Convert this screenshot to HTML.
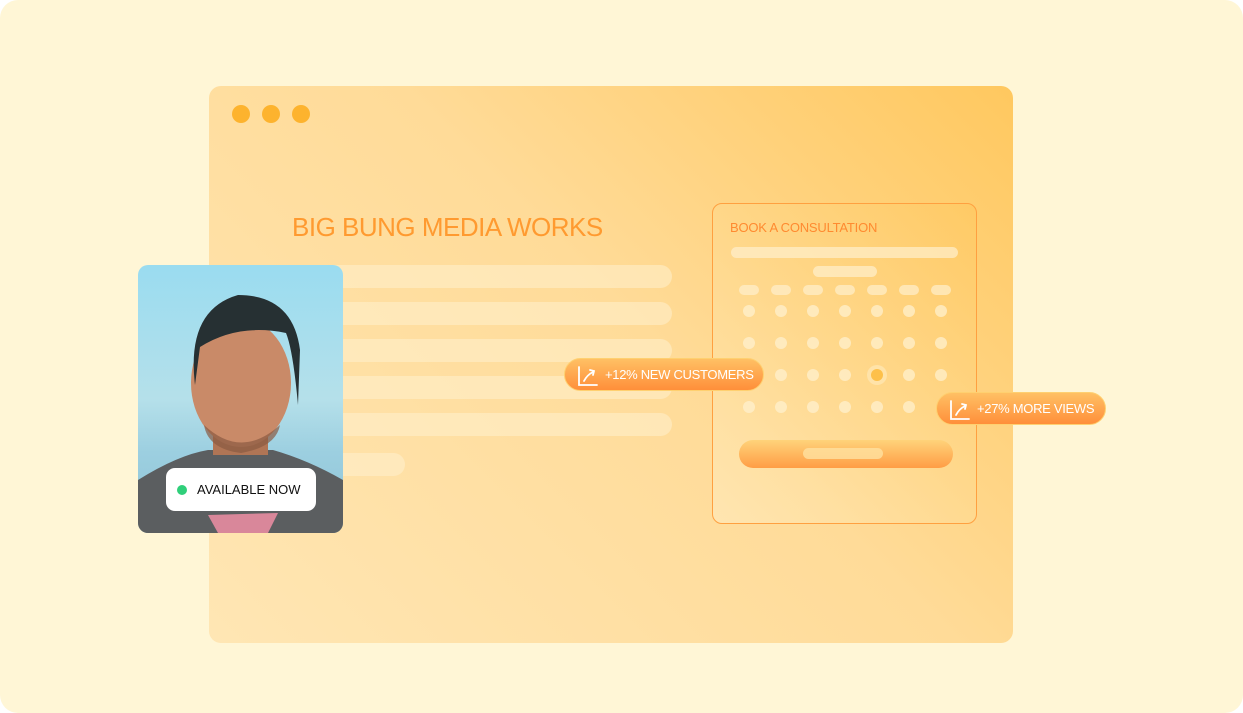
<!DOCTYPE html>
<html><head><style>
*{margin:0;padding:0;box-sizing:border-box}
body{width:1243px;height:713px;background:#fff;overflow:hidden;font-family:"Liberation Sans",sans-serif}
.bg{position:absolute;left:0;top:0;width:1243px;height:713px;background:#fff6d6;border-radius:18px}
.win{position:absolute;left:209px;top:86px;width:804px;height:557px;border-radius:12px;background:linear-gradient(225deg,#ffc85f 0%,#ffdb98 45%,#ffe6b4 100%)}
.dot{position:absolute;top:105px;width:18px;height:18px;border-radius:50%;background:#fdb32e}
.bar{position:absolute;left:200px;height:23px;border-radius:12px;background:rgba(255,240,205,.55)}
.title{position:absolute;left:292px;top:212px;font-size:26px;color:#ff9a30;letter-spacing:-.5px}
.photo{position:absolute;left:138px;top:265px;width:205px;height:268px;border-radius:10px;overflow:hidden;background:linear-gradient(#9adcf0 0%,#b5e0ea 50%,#9ccfe0 70%,#8fc3d5 100%)}
.avail{position:absolute;left:166px;top:468px;width:150px;height:43px;background:#fff;border-radius:9px;font-size:13px;color:#111;padding:14px 0 0 31px}
.avail:before{content:"";position:absolute;left:11px;top:17px;width:10px;height:10px;border-radius:50%;background:#2fcf7a}
.card{position:absolute;left:712px;top:203px;width:265px;height:321px;border:1px solid #ffa040;border-radius:10px;background:linear-gradient(225deg,rgba(255,200,95,.6),rgba(255,235,190,.6))}
.ct{position:absolute;left:730px;top:220px;font-size:13px;color:#ff8a30;letter-spacing:-.2px}
.pill{position:absolute;border-radius:6px;background:rgba(255,240,205,.7)}
.cd{position:absolute;width:12px;height:12px;border-radius:50%;background:rgba(255,240,205,.75)}
.btn{position:absolute;left:739px;top:440px;width:214px;height:28px;border-radius:14px;background:linear-gradient(#ffd37a,#ff9d45)}
.badge{position:absolute;height:33px;border-radius:17px;background:linear-gradient(#ffc064,#ff8f3a);border:1px solid #ffd070;color:#fff;font-size:13px;letter-spacing:-.3px;padding:8px 0 0 40px}
.badge svg{position:absolute;left:12px;top:6px}
</style></head><body>
<div class="bg"></div>
<div class="win"></div>
<div class="dot" style="left:232px"></div><div class="dot" style="left:262px"></div><div class="dot" style="left:292px"></div>
<div class="title">BIG BUNG MEDIA WORKS</div>
<div class="bar" style="top:265px;width:472px"></div>
<div class="bar" style="top:302px;width:472px"></div>
<div class="bar" style="top:339px;width:472px"></div>
<div class="bar" style="top:376px;width:472px"></div>
<div class="bar" style="top:413px;width:472px"></div>
<div class="bar" style="top:453px;width:205px"></div>
<div class="photo">
<svg width="205" height="268" viewBox="0 0 205 268">
<path d="M0 215 Q40 190 70 185 L135 185 Q170 195 205 215 L205 268 L0 268Z" fill="#5b5e60"/>
<path d="M70 250 L140 248 L130 268 L80 268Z" fill="#d9879a"/>
<rect x="75" y="150" width="55" height="40" fill="#b07555"/>
<ellipse cx="103" cy="118" rx="50" ry="64" fill="#c98a68"/>
<path d="M57 120 Q48 45 100 30 Q155 30 162 85 L160 140 Q155 85 148 68 Q100 58 62 82 Z" fill="#263033"/>
<path d="M66 160 Q103 195 142 160 Q138 182 103 188 Q70 184 66 160Z" fill="#8a5a42" opacity=".7"/>
</svg>
</div>
<div class="avail">AVAILABLE NOW</div>
<div class="card"></div>
<div class="ct">BOOK A CONSULTATION</div>
<div class="pill" style="left:731px;top:247px;width:227px;height:11px"></div>
<div class="pill" style="left:813px;top:266px;width:64px;height:11px"></div>
<div class="pill" style="left:739px;top:285px;width:20px;height:10px"></div>
<div class="pill" style="left:771px;top:285px;width:20px;height:10px"></div>
<div class="pill" style="left:803px;top:285px;width:20px;height:10px"></div>
<div class="pill" style="left:835px;top:285px;width:20px;height:10px"></div>
<div class="pill" style="left:867px;top:285px;width:20px;height:10px"></div>
<div class="pill" style="left:899px;top:285px;width:20px;height:10px"></div>
<div class="pill" style="left:931px;top:285px;width:20px;height:10px"></div>
<div class="cd" style="left:743px;top:305px"></div><div class="cd" style="left:775px;top:305px"></div><div class="cd" style="left:807px;top:305px"></div><div class="cd" style="left:839px;top:305px"></div><div class="cd" style="left:871px;top:305px"></div><div class="cd" style="left:903px;top:305px"></div><div class="cd" style="left:935px;top:305px"></div>
<div class="cd" style="left:743px;top:337px"></div><div class="cd" style="left:775px;top:337px"></div><div class="cd" style="left:807px;top:337px"></div><div class="cd" style="left:839px;top:337px"></div><div class="cd" style="left:871px;top:337px"></div><div class="cd" style="left:903px;top:337px"></div><div class="cd" style="left:935px;top:337px"></div>
<div class="cd" style="left:775px;top:369px"></div><div class="cd" style="left:807px;top:369px"></div><div class="cd" style="left:839px;top:369px"></div><div class="cd" style="left:867px;top:365px;width:20px;height:20px;background:rgba(255,235,190,.6)"></div><div class="cd" style="left:871px;top:369px;background:#fdc04a"></div><div class="cd" style="left:903px;top:369px"></div><div class="cd" style="left:935px;top:369px"></div>
<div class="cd" style="left:743px;top:401px"></div><div class="cd" style="left:775px;top:401px"></div><div class="cd" style="left:807px;top:401px"></div><div class="cd" style="left:839px;top:401px"></div><div class="cd" style="left:871px;top:401px"></div><div class="cd" style="left:903px;top:401px"></div>
<div class="btn"></div>
<div class="pill" style="left:803px;top:448px;width:80px;height:11px;background:rgba(255,225,160,.8)"></div>
<div class="badge" style="left:564px;top:358px;width:200px">+12% NEW CUSTOMERS
<svg width="22" height="22" viewBox="0 0 22 22" fill="none" stroke="#fff" stroke-width="1.8" stroke-linecap="round"><path d="M2 2V20H20"/><path d="M7 16Q10 10 16 7"/><path d="M13 5L17 6L16 10"/></svg></div>
<div class="badge" style="left:936px;top:392px;width:170px">+27% MORE VIEWS
<svg width="22" height="22" viewBox="0 0 22 22" fill="none" stroke="#fff" stroke-width="1.8" stroke-linecap="round"><path d="M2 2V20H20"/><path d="M7 16Q10 10 16 7"/><path d="M13 5L17 6L16 10"/></svg></div>
</body></html>
